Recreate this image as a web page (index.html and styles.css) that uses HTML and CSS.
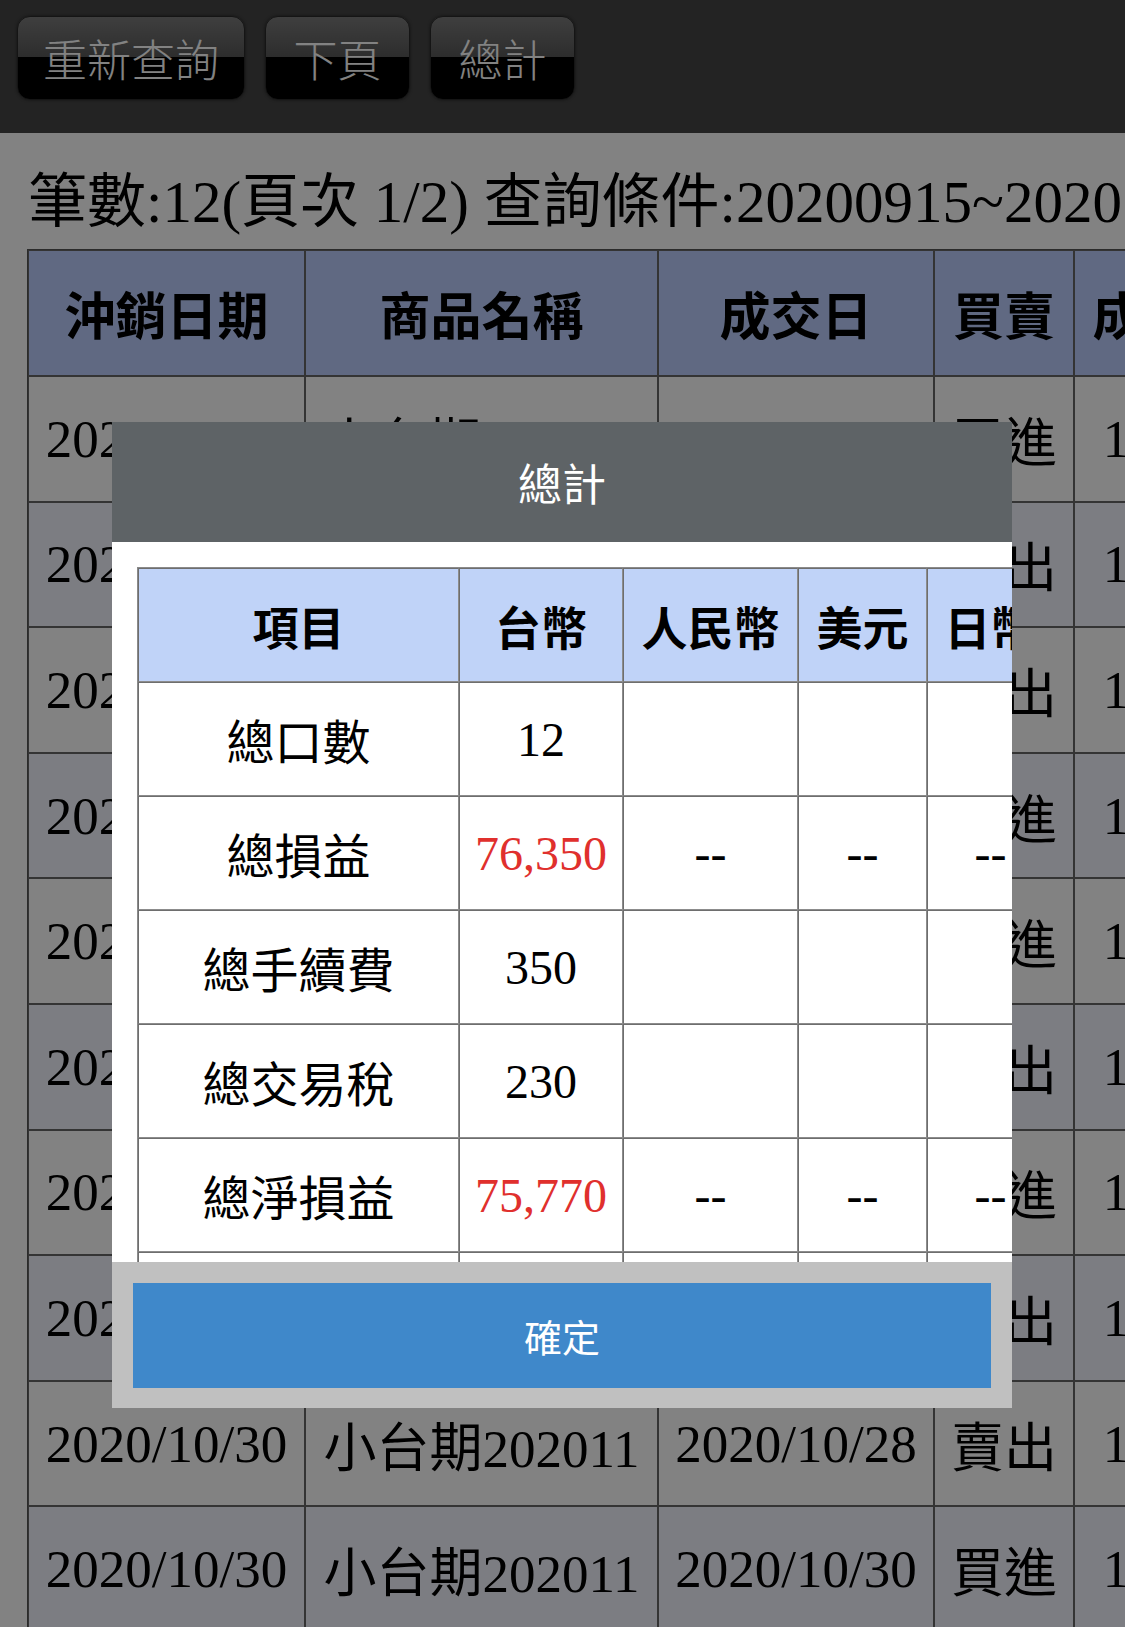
FILE: index.html
```html
<!DOCTYPE html>
<html lang="zh-Hant">
<head>
<meta charset="utf-8">
<title>沖銷明細查詢</title>
<link rel="stylesheet" href="styles.css">
</head>
<body>
<div class="page">
  <header class="toolbar">
    <button class="tb-btn tb-wide">重新查詢</button>
    <button class="tb-btn">下頁</button>
    <button class="tb-btn">總計</button>
  </header>

  <p class="summary">筆數:12(頁次 1/2) 查詢條件:20200915~20201030</p>

  <table class="trades">
    <thead>
      <tr>
        <th class="c-date">沖銷日期</th>
        <th class="c-name">商品名稱</th>
        <th class="c-deal">成交日</th>
        <th class="c-side">買賣</th>
        <th class="c-price">成交價</th>
      </tr>
    </thead>
    <tbody>
      <tr><td>2020/09/16</td><td>小台期202009</td><td>2020/09/10</td><td>買進</td><td>12745</td></tr>
      <tr class="alt"><td>2020/09/16</td><td>小台期202009</td><td>2020/09/14</td><td>賣出</td><td>12860</td></tr>
      <tr><td>2020/09/23</td><td>小台期202010</td><td>2020/09/18</td><td>賣出</td><td>12930</td></tr>
      <tr class="alt"><td>2020/09/23</td><td>小台期202010</td><td>2020/09/23</td><td>買進</td><td>12410</td></tr>
      <tr><td>2020/10/06</td><td>小台期202010</td><td>2020/10/06</td><td>買進</td><td>12605</td></tr>
      <tr class="alt"><td>2020/10/06</td><td>小台期202010</td><td>2020/10/05</td><td>賣出</td><td>12550</td></tr>
      <tr><td>2020/10/20</td><td>小台期202011</td><td>2020/10/20</td><td>買進</td><td>12810</td></tr>
      <tr class="alt"><td>2020/10/20</td><td>小台期202011</td><td>2020/10/16</td><td>賣出</td><td>12895</td></tr>
      <tr><td>2020/10/30</td><td>小台期202011</td><td>2020/10/28</td><td>賣出</td><td>12720</td></tr>
      <tr class="alt"><td>2020/10/30</td><td>小台期202011</td><td>2020/10/30</td><td>買進</td><td>12550</td></tr>
    </tbody>
  </table>
</div>

<div class="dim"></div>

<div class="dialog">
  <div class="dialog-title">總計</div>
  <div class="dialog-body">
    <table class="totals">
      <thead>
        <tr>
          <th class="t-item">項目</th>
          <th class="t-twd">台幣</th>
          <th class="t-cny">人民幣</th>
          <th class="t-usd">美元</th>
          <th class="t-jpy">日幣</th>
        </tr>
      </thead>
      <tbody>
        <tr><td>總口數</td><td>12</td><td></td><td></td><td></td></tr>
        <tr><td>總損益</td><td class="gain">76,350</td><td>--</td><td>--</td><td>--</td></tr>
        <tr><td>總手續費</td><td>350</td><td></td><td></td><td></td></tr>
        <tr><td>總交易稅</td><td>230</td><td></td><td></td><td></td></tr>
        <tr><td>總淨損益</td><td class="gain">75,770</td><td>--</td><td>--</td><td>--</td></tr>
        <tr><td>總權利金</td><td>0</td><td></td><td></td><td></td></tr>
      </tbody>
    </table>
  </div>
  <div class="dialog-foot">
    <button class="ok-btn">確定</button>
  </div>
</div>
</body>
</html>
```

FILE: styles.css
```css
html, body {
  margin: 0;
  padding: 0;
  background: #ffffff;
}

body {
  position: relative;
  width: 1125px;
  height: 1627px;
  overflow: hidden;
  font-family: "Liberation Serif", "Noto Sans CJK TC", serif;
  color: #000;
}

.page {
  width: 1125px;
  height: 1627px;
  overflow: hidden;
}

/* ---------- toolbar ---------- */
.toolbar {
  display: flex;
  gap: 20px;
  height: 133px;
  box-sizing: border-box;
  padding: 16px 17px 0;
  background: #454545;
}

.tb-btn {
  height: 84px;
  min-width: 145px;
  padding: 0 25px;
  border: 1px solid #2a2a2a;
  border-radius: 13px;
  background: linear-gradient(to bottom, #7c7c7c 0%, #585858 49%, #000 49%, #000 100%);
  box-shadow: 0 0 3px rgba(0, 0, 0, 0.5);
  color: #ffffff;
  font-family: "Noto Sans CJK TC", sans-serif;
  font-weight: 300;
  font-size: 44px;
  line-height: 1;
  display: flex;
  align-items: center;
  justify-content: center;
}

/* ---------- summary line ---------- */
.summary {
  margin: 0;
  padding: 40px 0 0 28px;
  height: 76px;
  font-size: 59px;
  line-height: 59px;
  white-space: nowrap;
}

/* ---------- trades table ---------- */
.trades {
  border-collapse: separate;
  border-spacing: 0;
  table-layout: fixed;
  width: 1236px;
  margin-left: 27px;
  border: 1px solid #555;
  font-size: 53px;
}

.trades th,
.trades td {
  box-sizing: border-box;
  border: 1px solid #666;
  text-align: center;
  white-space: nowrap;
  padding: 0;
  overflow: hidden;
}

.trades th {
  height: 126px;
  background: #bccfff;
  font-family: "Noto Sans CJK TC", sans-serif;
  font-weight: 700;
  font-size: 51px;
}

.trades td {
  height: 125.6px;
  background: #ffffff;
}

.trades tr.alt td {
  background: #f4f6ff;
}

.c-date { width: 277px; }
.c-name { width: 353px; }
.c-deal { width: 276px; }
.c-side { width: 140px; }
.c-price { width: 190px; }

/* ---------- page dimming ---------- */
.dim {
  position: absolute;
  inset: 0;
  background: rgba(0, 0, 0, 0.49);
}

/* ---------- totals dialog ---------- */
.dialog {
  position: absolute;
  left: 112px;
  top: 422px;
  width: 900px;
  display: flex;
  flex-direction: column;
}

.dialog-title {
  height: 120px;
  background: #5e6366;
  color: #ffffff;
  font-family: "Noto Sans CJK TC", sans-serif;
  font-weight: 400;
  font-size: 44px;
  display: flex;
  align-items: center;
  justify-content: center;
}

.dialog-body {
  height: 720px;
  box-sizing: border-box;
  padding: 25px 0 0 25px;
  background: #ffffff;
  overflow: hidden;
}

.totals {
  border-collapse: separate;
  border-spacing: 0;
  table-layout: fixed;
  width: 916px;
  border: 1px solid #8a8a8a;
  font-size: 48px;
}

.totals th,
.totals td {
  box-sizing: border-box;
  height: 114px;
  padding: 0;
  border: 1px solid #6e6e6e;
  border-right-color: #8c8c8c;
  border-bottom-color: #8c8c8c;
  text-align: center;
  white-space: nowrap;
  overflow: hidden;
}

.totals th {
  background: #c0d3f8;
  font-family: "Noto Sans CJK TC", sans-serif;
  font-weight: 700;
  font-size: 46px;
}

.totals td {
  background: #ffffff;
}

.totals td.gain {
  color: #e0302d;
}

.t-item { width: 321px; }
.t-twd { width: 164px; }
.t-cny { width: 175px; }
.t-usd { width: 129px; }
.t-jpy { width: 127px; }

.dialog-foot {
  background: #c0c0c0;
  padding: 21px 21px 20px;
}

.ok-btn {
  display: block;
  width: 100%;
  height: 105px;
  border: 0;
  background: #3f88ca;
  color: #ffffff;
  font-family: "Noto Sans CJK TC", sans-serif;
  font-weight: 400;
  font-size: 38px;
  line-height: 1;
}
```
